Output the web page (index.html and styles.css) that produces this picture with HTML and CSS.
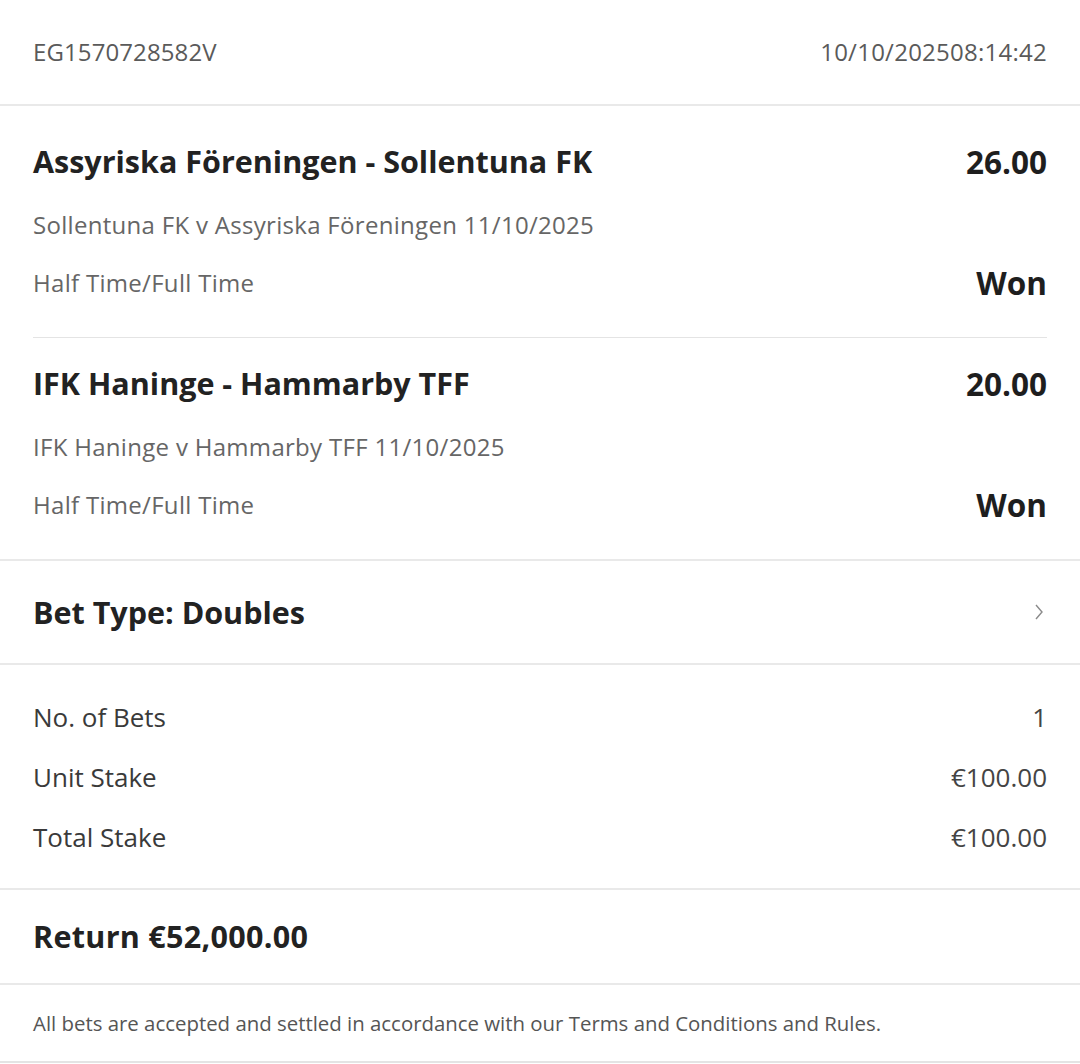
FILE: index.html
```html
<!DOCTYPE html>
<html lang="en">
<head>
<meta charset="utf-8">
<title>Bet receipt</title>
<link rel="stylesheet" href="styles.css">
</head>
<body>
<div class="receipt">
  <header class="head">
    <span class="ref">EG1570728582V</span>
    <span class="stamp">10/10/202508:14:42</span>
  </header>

  <section class="bets">
    <div class="bet bet-first">
      <div class="row title-row">
        <span class="title">Assyriska Föreningen - Sollentuna FK</span>
        <span class="odds">26.00</span>
      </div>
      <div class="row sub-row"><span class="sub">Sollentuna FK v Assyriska Föreningen 11/10/2025</span></div>
      <div class="row market-row">
        <span class="sub">Half Time/Full Time</span>
        <span class="result">Won</span>
      </div>
    </div>
    <div class="bet">
      <div class="row title-row">
        <span class="title">IFK Haninge - Hammarby TFF</span>
        <span class="odds">20.00</span>
      </div>
      <div class="row sub-row"><span class="sub">IFK Haninge v Hammarby TFF 11/10/2025</span></div>
      <div class="row market-row">
        <span class="sub">Half Time/Full Time</span>
        <span class="result">Won</span>
      </div>
    </div>
  </section>

  <section class="type">
    <span class="title">Bet Type: Doubles</span>
    <svg class="chev" width="12" height="20" viewBox="0 0 12 20" aria-hidden="true">
      <path d="M3 3 L9 10 L3 17" fill="none" stroke="#8a8a8a" stroke-width="1.4"/>
    </svg>
  </section>

  <section class="summary">
    <div class="srow"><span>No. of Bets</span><span class="sval">1</span></div>
    <div class="srow"><span>Unit Stake</span><span class="sval">€100.00</span></div>
    <div class="srow"><span>Total Stake</span><span class="sval">€100.00</span></div>
  </section>

  <section class="return">
    <span class="title">Return €52,000.00</span>
  </section>

  <footer class="foot">
    All bets are accepted and settled in accordance with our Terms and Conditions and Rules.
  </footer>
</div>
</body>
</html>
```

FILE: styles.css
```css
html, body {
  margin: 0;
  padding: 0;
  background: #ffffff;
}
body {
  font-family: "Open Sans", "Noto Sans", sans-serif;
  color: #222;
  width: 1080px;
  height: 1064px;
  overflow: hidden;
}
.receipt {
  display: flex;
  flex-direction: column;
}
.head {
  height: 103px;
  padding: 0 33px 1px;
  display: flex;
  align-items: center;
  justify-content: space-between;
  border-bottom: 2px solid #e9e9e9;
  font-size: 24px;
  color: #5a5a5a;
  letter-spacing: 0.1px;
}
.stamp {
  letter-spacing: 0.25px;
}
.bets {
  padding: 10px 33px 0;
  border-bottom: 2px solid #e9e9e9;
}
.bet {
  padding: 23px 0 37px;
}
.bet-first {
  border-bottom: 1.5px solid #e4e4e4;
}
.row {
  display: flex;
  justify-content: space-between;
  align-items: center;
}
.title-row {
  height: 44px;
}
.sub-row {
  height: 36px;
  margin-top: 23px;
}
.market-row {
  height: 36px;
  margin-top: 22px;
}
.title {
  font-weight: 700;
  font-size: 30.5px;
  color: #222;
}
.odds, .result {
  font-weight: 700;
  font-size: 31.5px;
  color: #1e1e1e;
}
.sub {
  font-size: 24px;
  color: #666;
  letter-spacing: 0.3px;
}
.type {
  height: 101px;
  padding: 0 33px 1px;
  display: flex;
  align-items: center;
  justify-content: space-between;
  border-bottom: 2px solid #e9e9e9;
}
.chev {
  margin-right: 2px;
}
.summary {
  padding: 22px 33px 21px;
  border-bottom: 2px solid #e9e9e9;
  font-size: 26px;
  color: #3a3a3a;
}
.srow {
  height: 60px;
  display: flex;
  align-items: center;
  justify-content: space-between;
}
.sval {
  color: #444;
}
.return {
  height: 92px;
  padding: 0 33px 1px;
  display: flex;
  align-items: center;
  border-bottom: 2px solid #e9e9e9;
}
.return .title {
  letter-spacing: 0.3px;
}
.foot {
  height: 75px;
  padding: 0 33px 1px;
  display: flex;
  align-items: center;
  font-size: 20.4px;
  color: #555;
  border-bottom: 2px solid #e4e4e4;
}
```
